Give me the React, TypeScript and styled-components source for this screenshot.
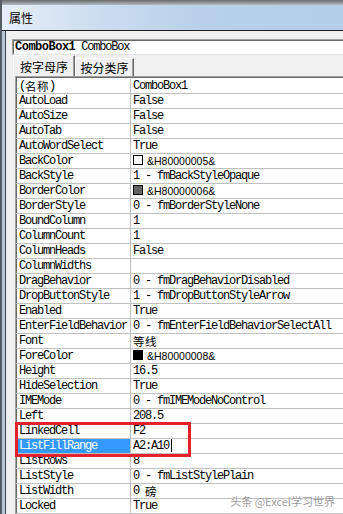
import styled, { createGlobalStyle } from 'styled-components';

type Prop = {
  name: string;
  value: string;
  swatch?: string;
  selected?: boolean;
};

const rows: Prop[] = [
  { name: '(名称)', value: 'ComboBox1' },
  { name: 'AutoLoad', value: 'False' },
  { name: 'AutoSize', value: 'False' },
  { name: 'AutoTab', value: 'False' },
  { name: 'AutoWordSelect', value: 'True' },
  { name: 'BackColor', value: '&H80000005&', swatch: '#ffffff' },
  { name: 'BackStyle', value: '1 - fmBackStyleOpaque' },
  { name: 'BorderColor', value: '&H80000006&', swatch: '#646464' },
  { name: 'BorderStyle', value: '0 - fmBorderStyleNone' },
  { name: 'BoundColumn', value: '1' },
  { name: 'ColumnCount', value: '1' },
  { name: 'ColumnHeads', value: 'False' },
  { name: 'ColumnWidths', value: '' },
  { name: 'DragBehavior', value: '0 - fmDragBehaviorDisabled' },
  { name: 'DropButtonStyle', value: '1 - fmDropButtonStyleArrow' },
  { name: 'Enabled', value: 'True' },
  { name: 'EnterFieldBehavior', value: '0 - fmEnterFieldBehaviorSelectAll' },
  { name: 'Font', value: '等线' },
  { name: 'ForeColor', value: '&H80000008&', swatch: '#000000' },
  { name: 'Height', value: '16.5' },
  { name: 'HideSelection', value: 'True' },
  { name: 'IMEMode', value: '0 - fmIMEModeNoControl' },
  { name: 'Left', value: '208.5' },
  { name: 'LinkedCell', value: 'F2' },
  { name: 'ListFillRange', value: 'A2:A10', selected: true },
  { name: 'ListRows', value: '8' },
  { name: 'ListStyle', value: '0 - fmListStylePlain' },
  { name: 'ListWidth', value: '0 磅' },
  { name: 'Locked', value: 'True' },
];

// split latin / CJK runs so CJK keeps its full width
const Mixed = ({ text }: { text: string }) => (
  <>
    {text.split(/([\u4e00-\u9fff]+)/).map((part, i) =>
      /[\u4e00-\u9fff]/.test(part) ? <Cjk key={i}>{part}</Cjk> : part
    )}
  </>
);

const App = () => {
  return (
    <>
      <GlobalStyle />
      <Window>
        <FrameTop />
        <TitleBar>属性</TitleBar>
        <Client>
          <ObjectBox>
            <b>ComboBox1</b> ComboBox
          </ObjectBox>
          <TabRow>
            <Tab active>按字母序</Tab>
            <Tab>按分类序</Tab>
          </TabRow>
          <Grid>
            {rows.map((row) => (
              <Row key={row.name}>
                <NameCell>
                  <NameLabel selected={row.selected}>
                    <Mixed text={row.name} />
                  </NameLabel>
                </NameCell>
                <ValueCell>
                  {row.swatch ? (
                    <>
                      <Swatch color={row.swatch} />
                      <HexText>{row.value}</HexText>
                    </>
                  ) : (
                    <Mixed text={row.value} />
                  )}
                  {row.selected && <Caret />}
                </ValueCell>
              </Row>
            ))}
          </Grid>
        </Client>
        <Highlight />
        <Watermark>头条 @Excel学习世界</Watermark>
      </Window>
    </>
  );
};

const GlobalStyle = createGlobalStyle`
  html, body {
    margin: 0;
    padding: 0;
  }
  body {
    width: 343px;
    height: 514px;
    overflow: hidden;
    background: #f0f0f0;
    font-family: 'Liberation Mono', 'Noto Sans CJK SC', monospace;
    color: #000;
  }
`;

const Window = styled.div`
  position: relative;
  display: flex;
  flex-direction: column;
  height: 514px;
  overflow: hidden;
  background: #b9c6d4;
  border-left: 2px solid #545b63;
`;

const FrameTop = styled.div`
  height: 5px;
  background: linear-gradient(#6a6a6a, #b4bcc5);
`;

const TitleBar = styled.div`
  height: 25px;
  display: flex;
  align-items: center;
  padding-left: 7px;
  border-bottom: 1px solid #1e1e1e;
  background: linear-gradient(to right, #e6eef8 0%, #cadcef 30%, #b8d0ea 60%, #b4cde8 100%);
  font-family: 'Noto Sans CJK SC', sans-serif;
  font-size: 12px;
`;

const Client = styled.div`
  flex: 1;
  display: flex;
  flex-direction: column;
  margin-left: 3px;
  padding-top: 8px;
  border-left: 1px solid #3f4349;
  background: #f0f0f0;
  min-height: 0;
`;

const ObjectBox = styled.div`
  box-sizing: border-box;
  height: 16px;
  margin-left: 6px;
  padding-left: 2px;
  border-top: 1px solid #a0a0a0;
  border-left: 1px solid #a0a0a0;
  border-bottom: 1px solid #e3e3e3;
  box-shadow: inset 1px 1px 0 #696969;
  background: #fff;
  font-size: 12px;
  line-height: 14px;
  letter-spacing: -1.2px;
  white-space: nowrap;

  b {
    letter-spacing: -0.5px;
  }
`;

const TabRow = styled.div`
  height: 24px;
  display: flex;
  align-items: flex-end;
  padding-left: 7px;
`;

const Tab = styled.div<{ active?: boolean }>`
  box-sizing: border-box;
  height: ${({ active }) => (active ? 21 : 18)}px;
  width: ${({ active }) => (active ? 62 : 59)}px;
  display: flex;
  align-items: center;
  justify-content: center;
  border-top: 1px solid #fff;
  border-left: 1px solid #fff;
  border-right: 1px solid #696969;
  box-shadow: inset -1px 0 0 #a0a0a0;
  font-family: 'Noto Sans CJK SC', sans-serif;
  font-size: 12px;
`;

const Grid = styled.div`
  flex: 1;
  margin-left: 9px;
  padding-top: 2px;
  border-top: 1px solid #a0a0a0;
  border-left: 1px solid #a0a0a0;
  box-shadow: inset 1px 1px 0 #696969;
  background: #fff;
`;

const Row = styled.div`
  box-sizing: border-box;
  height: 15px;
  display: flex;
  border-bottom: 1px solid #c0c0c0;
  font-size: 12px;
  line-height: 14px;
  letter-spacing: -1.2px;
  white-space: pre;
`;

const NameCell = styled.div`
  width: 113px;
  flex-shrink: 0;
  padding-left: 1px;
  overflow: hidden;
  border-right: 1px solid #c0c0c0;
`;

const NameLabel = styled.div<{ selected?: boolean }>`
  height: 14px;
  padding-left: 2px;
  background: ${({ selected }) => (selected ? '#3399ff' : 'transparent')};
  color: ${({ selected }) => (selected ? '#fff' : '#000')};
`;

const ValueCell = styled.div`
  flex: 1;
  height: 14px;
  padding-left: 2px;
`;

const Cjk = styled.span`
  display: inline-block;
  vertical-align: top;
  height: 14px;
  line-height: 14px;
  font-family: 'Noto Sans CJK SC', sans-serif;
  font-size: 11.5px;
  letter-spacing: 0.5px;
`;

const Swatch = styled.span<{ color: string }>`
  display: inline-block;
  vertical-align: top;
  box-sizing: border-box;
  width: 10px;
  height: 10px;
  margin: 1px 4px 0 0;
  border: 1px solid #000;
  background: ${({ color }) => color};
`;

const HexText = styled.span`
  font-family: 'Liberation Sans', sans-serif;
  font-size: 10.5px;
  letter-spacing: 0;
`;

const Caret = styled.span`
  display: inline-block;
  vertical-align: top;
  width: 1px;
  height: 13px;
  margin-left: 2px;
  background: #000;
`;

const Highlight = styled.div`
  position: absolute;
  left: 13px;
  top: 422px;
  width: 176px;
  height: 35px;
  box-sizing: border-box;
  border: 3px solid #e3202b;
`;

const Watermark = styled.div`
  position: absolute;
  right: 8px;
  top: 494px;
  font-family: 'Noto Sans CJK SC', sans-serif;
  font-size: 11px;
  line-height: 14px;
  color: rgba(120, 120, 120, 0.75);
  text-shadow: 0 0 1px rgba(255, 255, 255, 0.8);
`;

export default App;
